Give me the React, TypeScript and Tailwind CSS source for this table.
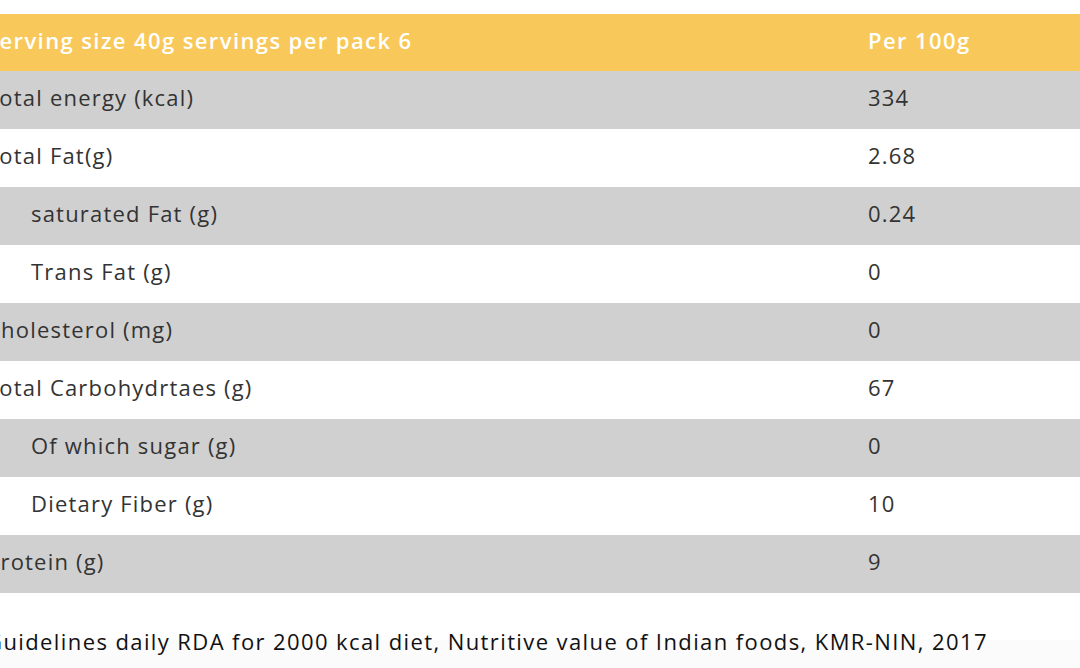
const rows: { label: string; value: string; sub?: boolean }[] = [
  { label: "Total energy (kcal)", value: "334" },
  { label: "Total Fat(g)", value: "2.68" },
  { label: "saturated Fat (g)", value: "0.24", sub: true },
  { label: "Trans Fat (g)", value: "0", sub: true },
  { label: "Cholesterol (mg)", value: "0" },
  { label: "Total Carbohydrtaes (g)", value: "67" },
  { label: "Of which sugar (g)", value: "0", sub: true },
  { label: "Dietary Fiber (g)", value: "10", sub: true },
  { label: "Protein (g)", value: "9" },
];

export default function App() {
  return (
    <div
      className="relative h-[668px] w-[1080px] overflow-hidden bg-white"
      style={{ fontFamily: "'Open Sans', Lato, sans-serif" }}
    >
      <div className="absolute bottom-0 left-0 h-[28px] w-full bg-[#fbfbfb]" />
      <div className="relative -ml-[14px] w-[1120px] pt-[14px] text-[22px] tracking-[1.2px]">
        <div className="flex h-[57px] items-center bg-[#f9c85a] pb-[5px] font-semibold tracking-[1.4px] text-white">
          <div className="w-[882px]">Serving size 40g servings per pack 6</div>
          <div className="flex-1">Per 100g</div>
        </div>
        {rows.map((r, i) => (
          <div
            key={r.label}
            className={
              "flex h-[58px] items-center pb-[6px] text-[#333333] " +
              (i % 2 === 0 ? "bg-[#d0d0d0]" : "bg-white")
            }
          >
            <div className={"w-[882px] " + (r.sub ? "pl-[45px]" : "")}>{r.label}</div>
            <div className="flex-1">{r.value}</div>
          </div>
        ))}
        <div className="pt-[32px] font-medium tracking-[1.4px] text-[#111111]">
          Guidelines daily RDA for 2000 kcal diet, Nutritive value of Indian foods, KMR-NIN, 2017
        </div>
      </div>
    </div>
  );
}
